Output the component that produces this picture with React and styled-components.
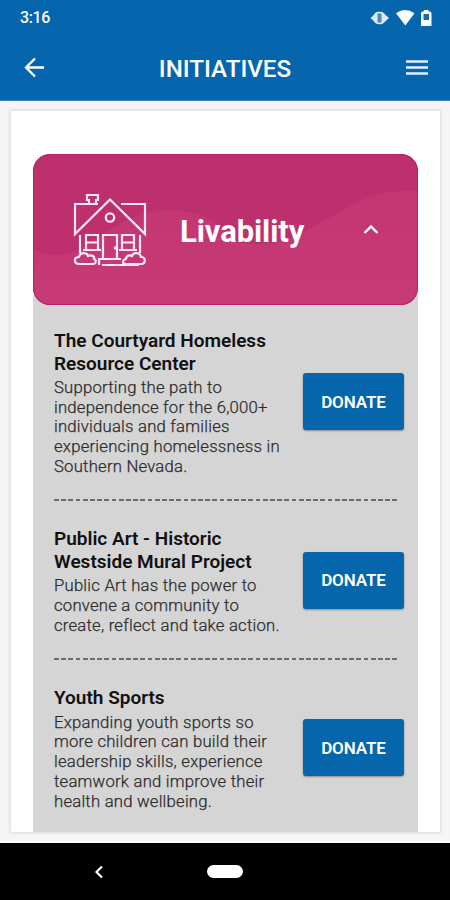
import React from 'react';
import styled, { createGlobalStyle } from 'styled-components';

const GlobalStyle = createGlobalStyle`
  * {
    box-sizing: border-box;
  }

  body {
    margin: 0;
    background: #f5f5f5;
    font-family: Roboto, sans-serif;
  }
`;

const Screen = styled.div`
  display: flex;
  flex-direction: column;
  width: 450px;
  height: 900px;
  overflow: hidden;
  background: #f5f5f6;
`;

const Header = styled.header`
  flex: none;
  height: 101px;
  background: #0566ae;
  border-bottom: 1px solid #3c83bb;
  color: #fff;
`;

const StatusBar = styled.div`
  display: flex;
  align-items: center;
  justify-content: space-between;
  height: 35px;
  padding: 0 18px 0 20px;
`;

const Clock = styled.span`
  font-size: 16px;
  font-weight: 500;
  letter-spacing: -0.4px;
`;

const StatusIcons = styled.div`
  display: flex;
  align-items: center;
`;

const TitleBar = styled.div`
  display: grid;
  grid-template-columns: 22px 1fr 24px;
  align-items: center;
  height: 65px;
  padding: 0 21px 0 23px;
`;

const Title = styled.h1`
  margin: 2px 0 0;
  font-size: 24.2px;
  font-weight: 500;
  line-height: 28px;
  text-align: center;
`;

const Content = styled.main`
  flex: 1;
  min-height: 0;
  padding: 10px 10px 9px 11px;
  border-bottom: 2px solid #fff;
`;

const Card = styled.section`
  height: 100%;
  overflow: hidden;
  padding: 43px 22px 0;
  background: #fff;
  box-shadow: 0 0 3px 1px #dadada;
`;

const Accordion = styled.div`
  min-height: 100%;
  background: linear-gradient(#fff 0 140px, #d5d5d5 140px);
`;

const AccordionHeader = styled.div`
  display: grid;
  grid-template-areas: 'stack';
  height: 151px;
  overflow: hidden;
  border-radius: 17px;
  background: #be2f6d;

  > * {
    grid-area: stack;
  }
`;

const AccordionLabel = styled.div`
  display: flex;
  align-items: center;
  padding: 0 39px 0 40px;
  border-radius: 17px;
  box-shadow: inset 0 0 0 1px #ba1f68;
  z-index: 1;
`;

const AccordionTitle = styled.h2`
  flex: 1;
  margin: 4px 0 0 33px;
  color: #fff;
  font-size: 31px;
  font-weight: 700;
  line-height: 36px;
  letter-spacing: -0.1px;
`;

const Items = styled.div`
  padding: 25px 14px 0 21px;
`;

const Item = styled.article`
  display: flex;
  align-items: center;
  justify-content: space-between;
`;

const ItemText = styled.div`
  width: 235px;
  white-space: pre;
`;

const ItemTitle = styled.h3`
  margin: 0 0 3px;
  color: #111;
  font-size: 19px;
  font-weight: 600;
  line-height: 22.5px;
`;

const ItemDescription = styled.p`
  margin: 0;
  color: #2c2c2c;
  font-size: 16.7px;
  font-weight: 300;
  line-height: 19.7px;
  letter-spacing: 0.22px;
  -webkit-text-stroke: 0.25px #2c2c2c;
`;

const DonateButton = styled.button`
  width: 101px;
  height: 57px;
  margin-bottom: 3px;
  padding: 0;
  border: 0;
  border-radius: 3px;
  background: #0566ab;
  box-shadow: 0 1px 2px rgba(0, 0, 0, 0.35);
  color: #fff;
  font-family: inherit;
  font-size: 17px;
  font-weight: 600;
  letter-spacing: -0.1px;
`;

const Divider = styled.div`
  width: 343px;
  height: 2px;
  margin: 22.7px 0 27.1px;
  background: repeating-linear-gradient(90deg, #6c6c6c 0 4.8px, transparent 4.8px 7.2px);
`;

const NavBar = styled.nav`
  display: grid;
  grid-template-columns: 1fr 36px 1fr;
  align-items: center;
  flex: none;
  height: 57px;
  background: #000;
`;

const NavBack = styled.div`
  display: flex;
  padding-left: 94px;
`;

const HomePill = styled.div`
  height: 13px;
  border-radius: 7px;
  background: #fff;
`;

const items = [
  {
    id: 'courtyard',
    title: 'The Courtyard Homeless\nResource Center',
    description:
      'Supporting the path to\nindependence for the 6,000+\nindividuals and families\nexperiencing homelessness in\nSouthern Nevada.',
  },
  {
    id: 'public-art',
    title: 'Public Art - Historic\nWestside Mural Project',
    description: 'Public Art has the power to\nconvene a community to\ncreate, reflect and take action.',
  },
  {
    id: 'youth-sports',
    title: 'Youth Sports',
    description:
      'Expanding youth sports so\nmore children can build their\nleadership skills, experience\nteamwork and improve their\nhealth and wellbeing.',
  },
];

const StatusGlyphs = () => (
  <svg width="62" height="18" viewBox="0 0 62 18">
    <path d="M0.500 9l4.500-4v8zM19 9l-4.500-4v8z" fill="#dceafa" />
    <rect x="3.500" y="2.800" width="12" height="12.500" rx="5" fill="#dceafa" />
    <rect x="7.500" y="4.500" width="4" height="9" fill="#4a86c0" />
    <path d="M26 4.200Q35 -2 44.500 4.200L35.300 16.500z" fill="#fff" />
    <path d="M51 4.500q0-2 2-2h.8V1h4.700v1.500h1q2 0 2 2V17H51z" fill="#fff" />
    <rect x="53.500" y="5" width="5.500" height="6" fill="#1869ab" />
  </svg>
);

const BackIcon = () => (
  <svg width="22" height="22" viewBox="0 0 22 22" fill="none" stroke="#fff" strokeWidth="2.300">
    <path d="M21 10.500H3M12 1.500l-9 9 9 9" />
  </svg>
);

const MenuIcon = () => (
  <svg width="24" height="22" viewBox="0 0 24 22" fill="none" stroke="#e4f0ff" strokeWidth="2.500">
    <path d="M1 4.500h22M1 10.500h22M1 16.500h22" />
  </svg>
);

const Wave = () => (
  <svg width="385" height="151" viewBox="0 0 385 151">
    <defs>
      <linearGradient id="wave" x1="0" y1="0" x2="0" y2="1">
        <stop offset="0" stopColor="#c33672" />
        <stop offset="1" stopColor="#c63a76" />
      </linearGradient>
    </defs>
    <path
      d="M0 95C18 104 35 103 54 91C83 70 108 55 142 56C187 60 185 78 206 89C249 95 274 76 302 61C329 43 351 35 385 37V151H0z"
      fill="url(#wave)"
    />
  </svg>
);

const HouseIcon = () => (
  <svg width="74" height="74" viewBox="0 0 74 74" fill="none" stroke="#ffe7f3" strokeWidth="2.200">
    <path d="M25 11H2v30L37 6.500 72 41V11H48" />
    <path d="M16 11V7h-2V2h11v5h-2v4" />
    <circle cx="37" cy="24.500" r="4.200" />
    <path d="M7 42v18M67 42v18M10 57h18M46 57h18" />
    <path d="M13 42h12v15H13zM13 49.500h12M49 42h12v15H49zM49 49.500h12" />
    <path d="M30 66V42h14v24M42 53.500v3" />
    <path d="M26 72v-6h22M29 72h37" />
    <path d="M6 71c-5 0-6-7 0-7 1-5 8-5 9-1 4-2 7 1 6 3 3 1 2 5-1 5zM57 71h11c5 0 5-7 0-7-1-5-8-5-9-1-4-2-6 1-6 3-4 1-4 5 0 5z" />
  </svg>
);

const ChevronUp = () => (
  <svg width="16" height="12" viewBox="0 0 16 12" fill="none" stroke="#fff" strokeWidth="2.300">
    <path d="M1.500 9L8 2.500 14.500 9" />
  </svg>
);

const NavBackIcon = () => (
  <svg width="10" height="14" viewBox="0 0 10 14" fill="none" stroke="#fff" strokeWidth="2.200">
    <path d="M8 1.500L2.500 7 8 12.500" />
  </svg>
);

const Initiative = ({ title, description }) => (
  <Item>
    <ItemText>
      <ItemTitle>{title}</ItemTitle>
      <ItemDescription>{description}</ItemDescription>
    </ItemText>
    <DonateButton type="button">DONATE</DonateButton>
  </Item>
);

export default () => (
  <>
    <GlobalStyle />
    <Screen>
      <Header>
        <StatusBar>
          <Clock>3:16</Clock>
          <StatusIcons><StatusGlyphs /></StatusIcons>
        </StatusBar>
        <TitleBar>
          <BackIcon />
          <Title>INITIATIVES</Title>
          <MenuIcon />
        </TitleBar>
      </Header>
      <Content>
        <Card>
          <Accordion>
            <AccordionHeader>
              <Wave />
              <AccordionLabel>
                <HouseIcon />
                <AccordionTitle>Livability</AccordionTitle>
                <ChevronUp />
              </AccordionLabel>
            </AccordionHeader>
            <Items>
              {
                items.map((item, index) => (
                  <React.Fragment key={item.id}>
                    {index > 0 && <Divider />}
                    <Initiative {...item} />
                  </React.Fragment>
                ))
              }
            </Items>
          </Accordion>
        </Card>
      </Content>
      <NavBar>
        <NavBack><NavBackIcon /></NavBack>
        <HomePill />
      </NavBar>
    </Screen>
  </>
);
